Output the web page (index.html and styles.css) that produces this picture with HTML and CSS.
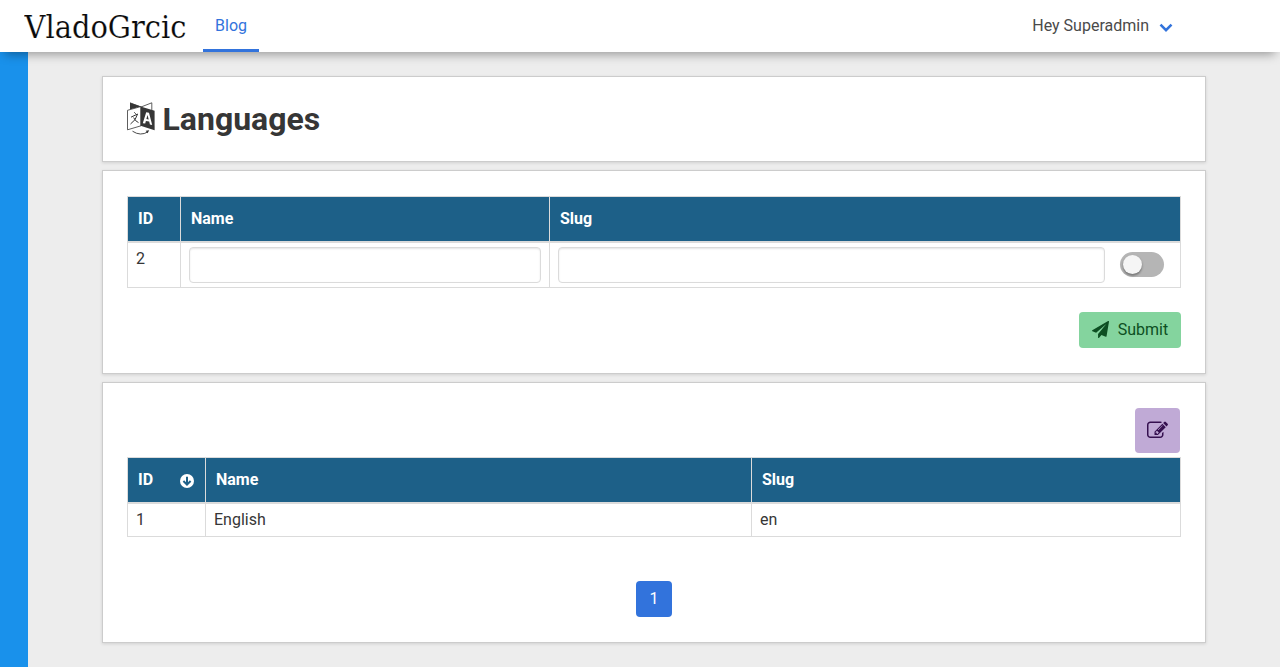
FILE: index.html
```html
<!DOCTYPE html>
<html lang="en">
<head>
<meta charset="utf-8">
<title>Languages</title>
<link rel="stylesheet" href="styles.css">
</head>
<body>
<nav class="navbar">
  <a class="brand"><svg width="164" height="40" viewBox="0 0 164 40"><text class="brand-text" x="0.500" y="31.500" textLength="162" lengthAdjust="spacingAndGlyphs">VladoGrcic</text></svg></a>
  <a class="tab">Blog</a>
  <a class="user">Hey Superadmin
    <svg class="chevron" width="14" height="10" viewBox="0 0 14 10"><path d="M1.500 1.700 7 7.200 12.500 1.700" fill="none" stroke="#3273dc" stroke-width="2.600"/></svg>
  </a>
</nav>
<div class="page">
  <aside class="sidebar"></aside>
  <main class="main">
    <section class="box box-title">
      <svg class="title-icon" width="28" height="33" viewBox="0 0 28 33">
        <path d="M3 0.8 14 5 24.8.8V9" fill="none" stroke="#363636" stroke-width=".8"/>
        <path d="M3 .8 14 4.4 3 7.6z" fill="#363636"/>
        <path d="M.5 8.3 14 4.5V23.8L.5 27.8z" fill="#fff" stroke="#363636" stroke-width=".8"/>
        <path d="M13.5 4.5 27.6 8.8V28.2L13.5 23.8z" fill="#363636"/>
        <path d="M7.300 10.300 8.700 11.800M4 15.200 10.600 12Q9 18.300 3.500 22M6.600 15.600Q8.500 19.400 11.500 20.600" fill="none" stroke="#363636" stroke-width="1"/>
        <path d="M15.8 21.2 19.2 10.2 22 10.8 25.2 23 22.9 22.5 22.2 19.6 18.9 19 18.2 21.6zM19.4 16.9 21.7 17.4 20.5 12.9z" fill="#fff" fill-rule="evenodd"/>
        <path d="M5.5 29.2Q13.5 34.5 21 29.8" fill="none" stroke="#363636" stroke-width=".9"/>
        <path d="M18.7 28.7 22.2 28.2 20.6 31.2z" fill="#363636"/>
      </svg>
      <h1 class="title">Languages</h1>
    </section>
    <section class="box box-form">
      <table class="table form-table">
        <thead><tr><th class="c-id">ID</th><th class="c-name">Name</th><th>Slug</th></tr></thead>
        <tbody><tr>
          <td><span class="row-id">2</span></td>
          <td><input class="input" type="text"></td>
          <td><div class="slug-field"><input class="input" type="text"><span class="switch"><span class="knob"></span></span></div></td>
        </tr></tbody>
      </table>
      <div class="actions">
        <button class="button submit"><svg width="17" height="17" viewBox="0 0 1792 1792"><path fill="#0d4f22" d="M1764 11q33 24 27 64l-256 1536q-5 29-32 45-14 8-31 8-11 0-24-5l-453-185-242 295q-18 23-49 23-13 0-22-4-19-7-30.500-23.500t-11.500-36.500v-349l864-1059-1069 925-395-162q-37-14-40-55-2-40 32-59l1664-960q15-9 32-9 20 0 36 11z"/></svg><span>Submit</span></button>
      </div>
    </section>
    <section class="box box-list">
      <div class="toolbar"><button class="button edit"><svg width="21" height="21" viewBox="0 0 1792 1792"><path fill="#35104f" d="M888 1184l116-116-152-152-116 116v56h96v96h56zm440-720q-16-16-33 1l-350 350q-17 17-1 33t33-1l350-350q17-17 1-33zm80 594v190q0 119-84.500 203.500t-203.500 84.500h-832q-119 0-203.500-84.500t-84.500-203.500v-832q0-119 84.500-203.500t203.500-84.500h832q63 0 117 25 15 7 18 23 3 17-9 29l-49 49q-14 14-32 8-23-6-45-6h-832q-66 0-113 47t-47 113v832q0 66 47 113t113 47h832q66 0 113-47t47-113v-126q0-13 9-22l64-64q15-15 35-7t20 29zm-96-738l288 288-672 672h-288v-288zm444 132l-92 92-288-288 92-92q28-28 68-28t68 28l152 152q28 28 28 68t-28 68z"/></svg></button></div>
      <table class="table">
        <thead><tr><th class="l-id"><span class="sort">ID<svg width="14" height="14" viewBox="0 0 14 14"><circle cx="7" cy="7" r="7" fill="#fff"/><path d="M7 2.8V10.500M3.400 7 7 10.600 10.600 7" fill="none" stroke="#1d6088" stroke-width="2"/></svg></span></th><th class="l-name">Name</th><th>Slug</th></tr></thead>
        <tbody><tr class="data"><td>1</td><td>English</td><td>en</td></tr></tbody>
      </table>
      <div class="pagination"><a class="page-link">1</a></div>
    </section>
  </main>
</div>
</body>
</html>
```
FILE: styles.css
```css
* { box-sizing: border-box; }
body {
  margin: 0;
  height: 667px;
  overflow: hidden;
  background: #ededed;
  color: #363636;
  font: 16px/24px Roboto, sans-serif;
}
.navbar {
  position: relative;
  z-index: 2;
  display: flex;
  height: 52px;
  padding: 0 107px 0 24px;
  background: #fff;
  box-shadow: 0 7px 10px -5px rgba(0, 0, 0, .38);
}
.brand { width: 179px; padding-top: 6px; }
.brand-text { font: 31px "DejaVu Serif Condensed", "DejaVu Serif", serif; fill: #0a0a0a; stroke: #fff; stroke-width: .15px; }
.tab {
  width: 56px;
  padding-top: 14px;
  border-bottom: 3px solid #3273dc;
  color: #3273dc;
  text-align: center;
}
.user { display: flex; margin-left: auto; padding-top: 14px; color: #4a4a4a; }
.chevron { margin: 9px 0 0 10px; }
.page { display: flex; height: 615px; }
.sidebar { width: 28px; background: #1991eb; }
.main { display: flex; flex-direction: column; gap: 8px; width: 1178px; padding: 24px 0 0 74px; }
.box {
  padding: 25px 24px 24px;
  border: 1px solid #ccc;
  background: #fff;
  box-shadow: 0 1px 3px rgba(0, 0, 0, .12);
}
.box-title { display: flex; height: 86px; padding-top: 24px; }
.title-icon { margin: 1px 7.500px 0 0; }
.title { margin: 0; font-size: 32px; line-height: 36px; font-weight: 700; }
.box-form { height: 204px; }
.box-list { height: 261px; }
.table {
  width: 1054px;
  table-layout: fixed;
  border-collapse: separate;
  border-spacing: 0;
  border: solid #dbdbdb;
  border-width: 1px 0 0 1px;
}
th {
  height: 46px;
  padding: 0 10px;
  border: solid #dbdbdb;
  border-width: 0 1px 2px 0;
  background: #1d6088;
  color: #fff;
  text-align: left;
}
td {
  height: 45px;
  padding: 4px 8px;
  border: solid #dbdbdb;
  border-width: 0 1px 1px 0;
  vertical-align: top;
}
.data td { height: 33px; }
.c-id { width: 53px; }
.c-name { width: 369px; }
.l-id { width: 78px; }
.l-name { width: 546px; }
.row-id { display: block; }
.input {
  display: block;
  width: 100%;
  height: 36px;
  border: 1px solid #dbdbdb;
  border-radius: 4px;
  background: #fff;
  box-shadow: inset 0 1px 2px rgba(10, 10, 10, .1);
}
.slug-field { display: flex; align-items: flex-start; padding-right: 8px; }
.switch {
  flex: none;
  width: 44px;
  height: 25px;
  margin: 5px 0 0 15px;
  padding: 3px;
  border-radius: 13px;
  background: #b5b5b5;
}
.knob {
  display: block;
  width: 19px;
  height: 19px;
  border-radius: 50%;
  background: #f5f5f5;
  box-shadow: 0 2px 2px rgba(0, 0, 0, .25), 0 1px 3px rgba(0, 0, 0, .15);
}
.button {
  display: flex;
  align-items: center;
  justify-content: center;
  padding: 0;
  border: 0;
  border-radius: 4px;
  font: inherit;
}
.actions { display: flex; justify-content: flex-end; margin-top: 24px; }
.submit { width: 102px; height: 36px; gap: 9px; background: #84d49e; color: #0d4f22; }
.submit svg { margin-bottom: 1px; }
.toolbar { display: flex; justify-content: flex-end; padding: 0 1px 4px 0; }
.edit { width: 45px; height: 45px; background: #c0aad6; }
.sort { display: flex; justify-content: space-between; align-items: center; }
.sort svg { margin: 2px 1px 0 0; }
.pagination { display: flex; justify-content: center; padding-top: 44px; }
.page-link {
  width: 36px;
  height: 36px;
  border-radius: 4px;
  background: #3273dc;
  color: #fff;
  line-height: 35px;
  text-align: center;
}
```
